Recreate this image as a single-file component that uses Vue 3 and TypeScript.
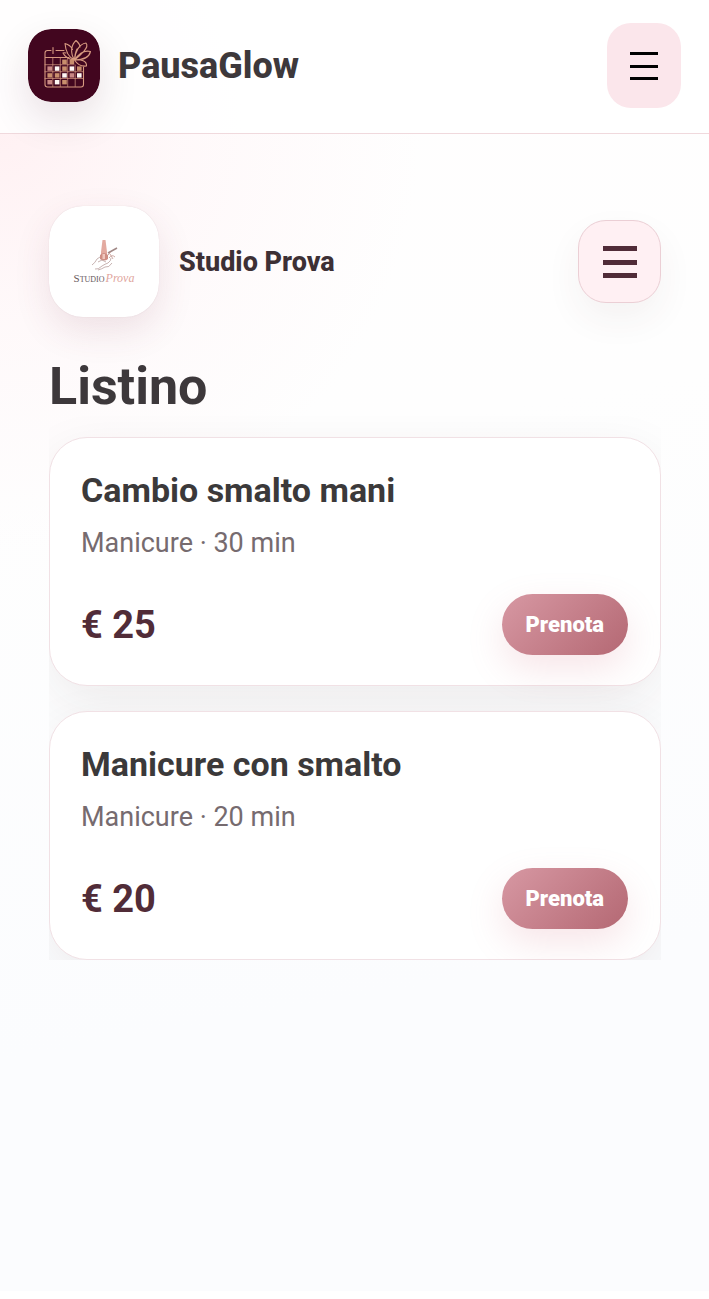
<script setup lang="ts">
interface Service {
  name: string
  category: string
  minutes: number
  price: number
}

interface Cell {
  x: number
  y: number
  fill: string
}

const services: Service[] = [
  { name: 'Cambio smalto mani', category: 'Manicure', minutes: 30, price: 25 },
  { name: 'Manicure con smalto', category: 'Manicure', minutes: 20, price: 20 },
]

// Calendar days of the brand mark: t = tan, p = rose, w = white, - = empty
const rows = ['--tt-', 'pwtwt', 'ttwpw', 'pwt--']
const fills: Record<string, string> = { t: '#c98f6d', p: '#c98784', w: '#fff8f4' }
const cells: Cell[] = rows.flatMap((row, r) =>
  [...row].flatMap((c, i) =>
    c === '-' ? [] : [{ x: 19.4 + i * 7.4, y: 30.6 + r * 6.8, fill: fills[c] }],
  ),
)
</script>

<template>
  <div class="page">
    <header class="topbar">
      <a class="brand" href="#">
        <svg class="brand-mark" viewBox="0 0 72 73" aria-hidden="true">
          <rect width="72" height="73" rx="23" fill="#42061f" />
          <g fill="none" stroke="#d79a80" stroke-width="1.1" stroke-linecap="round" stroke-linejoin="round">
            <path d="M23 21.5H19.5Q17 21.5 17 24V55.5Q17 58 19.5 58H53Q55.500 58 55.500 55.500V38M28 21.500H36M25 18.500V24.500M17 28.500H41" />
            <path stroke-width=".7" d="M24.800 29V57.500M32.300 29V57.500M39.700 29V57.500M47.200 36V57.500M17 35.700H46M17 42.700H55M17 49.500H55" />
            <path d="M46.500 31C40 28 37.500 21 37 14.500Q42.500 16 44.500 20.500M46.500 31C42 24 43 16 48 11.500Q52 15 52 18M46.500 31C47 23 51 15 58 14Q60.500 17 56 22Q53 26 46.500 31C52 23 57 21 62.500 22.500Q60.500 31 46.500 31C53 30 59 32 58.500 37Q51 38 46.500 31M46.500 31Q47 24 49 20M38 24Q35.500 23.500 35 24Q38 30 46.500 31" />
          </g>
          <rect v-for="(c, i) in cells" :key="i" :x="c.x" :y="c.y" width="4.600" height="4.400" :fill="c.fill" />
        </svg>
        <span class="brand-name">PausaGlow</span>
      </a>
      <button class="nav-button" type="button" aria-label="Menu">
        <svg width="28" height="28" viewBox="0 0 28 28" aria-hidden="true">
          <path d="M0 1.500H28M0 14.500H28M0 26.500H28" stroke="#000" stroke-width="3" />
        </svg>
      </button>
    </header>

    <main class="content">
      <div class="studio">
        <div class="studio-logo">
          <svg class="studio-art" width="30" height="32" viewBox="0 0 30 32" aria-hidden="true">
            <path d="M13.500 1H16.500L18 13V16H12V13Z" fill="#e3aaa0" />
            <path d="M11 16Q15 12 19 16V20Q15 23 11 20Z" fill="#cf8e84" />
            <path d="M13.500 15H16V20H13.500Z" fill="#f0c8bf" />
            <path d="M19 14L28 9" stroke="#a08886" stroke-width="1.500" />
            <path d="M19 16L22 13M20 19Q23 15 26 18M21 15L24 20" fill="none" stroke="#ceaaa5" />
            <path d="M3 26Q6 24 8 20L11 18M6 30Q9 31 13 27Q16 25 19 24Q22 22 22 19M9 31Q13 30 16 28Q20 29 23 24M9 23L13 21L17 23" fill="none" stroke="#b9a09d" stroke-width=".8" />
          </svg>
          <div class="studio-wordmark"><span class="caps">Studio</span><span class="script">Prova</span></div>
        </div>
        <span class="studio-name">Studio Prova</span>
        <button class="studio-menu" type="button" aria-label="Menu dello studio">
          <svg width="34" height="34" viewBox="0 0 34 34" aria-hidden="true">
            <path d="M0 3.500H34M0 17.500H34M0 30.500H34" stroke="#512c38" stroke-width="5" />
          </svg>
        </button>
      </div>

      <h1>Listino</h1>

      <ul class="services">
        <li v-for="s in services" :key="s.name" class="card">
          <h2>{{ s.name }}</h2>
          <p class="meta">{{ s.category }} · {{ s.minutes }} min</p>
          <div class="card-foot">
            <span class="price">€ {{ s.price }}</span>
            <button class="book" type="button">Prenota</button>
          </div>
        </li>
      </ul>
    </main>
  </div>
</template>

<style>
body {
  margin: 0;
  background: #fff;
}
</style>

<style scoped>
.page {
  box-sizing: border-box;
  min-height: calc(100vh - 8px);
  font-family: Roboto, "Liberation Sans", sans-serif;
  color: #3d383b;
  background:
    radial-gradient(circle at 0 130px, #fff1f3 0, rgba(255, 245, 247, 0.6) 180px, rgba(255, 255, 255, 0) 420px),
    linear-gradient(170deg, #fffefe 0, #fefefe 35%, #fbfcfe 75%, #fbfcfe 100%);
}

button {
  display: flex;
  align-items: center;
  justify-content: center;
  padding: 0;
  border: 0;
  font-family: inherit;
  cursor: pointer;
}

.topbar {
  display: flex;
  align-items: center;
  justify-content: space-between;
  padding: 23px 28px 25px;
  border-bottom: 1px solid #f0d9dd;
  background: rgba(255, 255, 255, 0.84);
}

.brand {
  display: flex;
  align-items: center;
  gap: 18px;
  color: inherit;
  text-decoration: none;
}

.brand-mark {
  width: 72px;
  height: 73px;
  border-radius: 23px;
  box-shadow: 0 16px 40px rgba(66, 6, 31, 0.12);
}

.brand-name {
  font-size: 36px;
  font-weight: 800;
  line-height: 44px;
}

.nav-button {
  width: 74px;
  height: 85px;
  border-radius: 24px;
  background: #fbe6eb;
}

.content {
  padding: 72px 48px 48px 49px;
}

.studio {
  display: flex;
  align-items: center;
  gap: 20px;
}

.studio-logo {
  display: flex;
  flex-direction: column;
  align-items: center;
  justify-content: center;
  width: 110px;
  height: 111px;
  border-radius: 34px;
  background: #fff;
  box-shadow: 0 14px 36px rgba(120, 50, 75, 0.12), 0 0 1px rgba(120, 50, 75, 0.2);
}

.studio-wordmark {
  display: flex;
  align-items: baseline;
  gap: 1px;
  font-family: "Liberation Serif", serif;
  line-height: 14px;
  white-space: nowrap;
}

.caps {
  font-size: 11px;
  font-variant: small-caps;
  color: #67585c;
}

.script {
  font-size: 12px;
  font-style: italic;
  color: #dfa69e;
}

.studio-name {
  flex: 1;
  font-size: 27px;
  font-weight: 800;
  line-height: 34px;
  color: #3d3035;
}

.studio-menu {
  box-sizing: border-box;
  width: 83px;
  height: 83px;
  border: 1px solid #ebcfd5;
  border-radius: 28px;
  background: #fff0f3;
  box-shadow: 0 16px 36px rgba(80, 45, 56, 0.06);
}

h1 {
  margin: 41px 0 0;
  font-size: 52px;
  font-weight: 700;
  line-height: 58px;
}

.services {
  display: flex;
  flex-direction: column;
  gap: 25px;
  margin: 0;
  padding: 21px 0 0;
  list-style: none;
  overflow: hidden;
}

.card {
  padding: 31px 32px 30px 31px;
  border: 1px solid #f1e1e5;
  border-radius: 38px;
  background: #fff;
  box-shadow: 0 16px 50px rgba(61, 35, 42, 0.08);
}

h2 {
  margin: 0;
  font-size: 34px;
  font-weight: 700;
  line-height: 42px;
  color: #3b393a;
}

.meta {
  margin: 15px 0 0;
  font-size: 27px;
  line-height: 34px;
  color: #766b6f;
}

.card-foot {
  display: flex;
  align-items: center;
  justify-content: space-between;
  margin-top: 34px;
}

.price {
  font-size: 38px;
  font-weight: 700;
  line-height: 44px;
  color: #512c38;
}

.book {
  height: 61px;
  padding: 0 24px;
  border-radius: 31px;
  font-size: 22px;
  font-weight: 900;
  color: #fff;
  background: linear-gradient(135deg, #d798a3, #b46873);
  box-shadow: 0 14px 36px rgba(210, 110, 128, 0.18);
}
</style>
